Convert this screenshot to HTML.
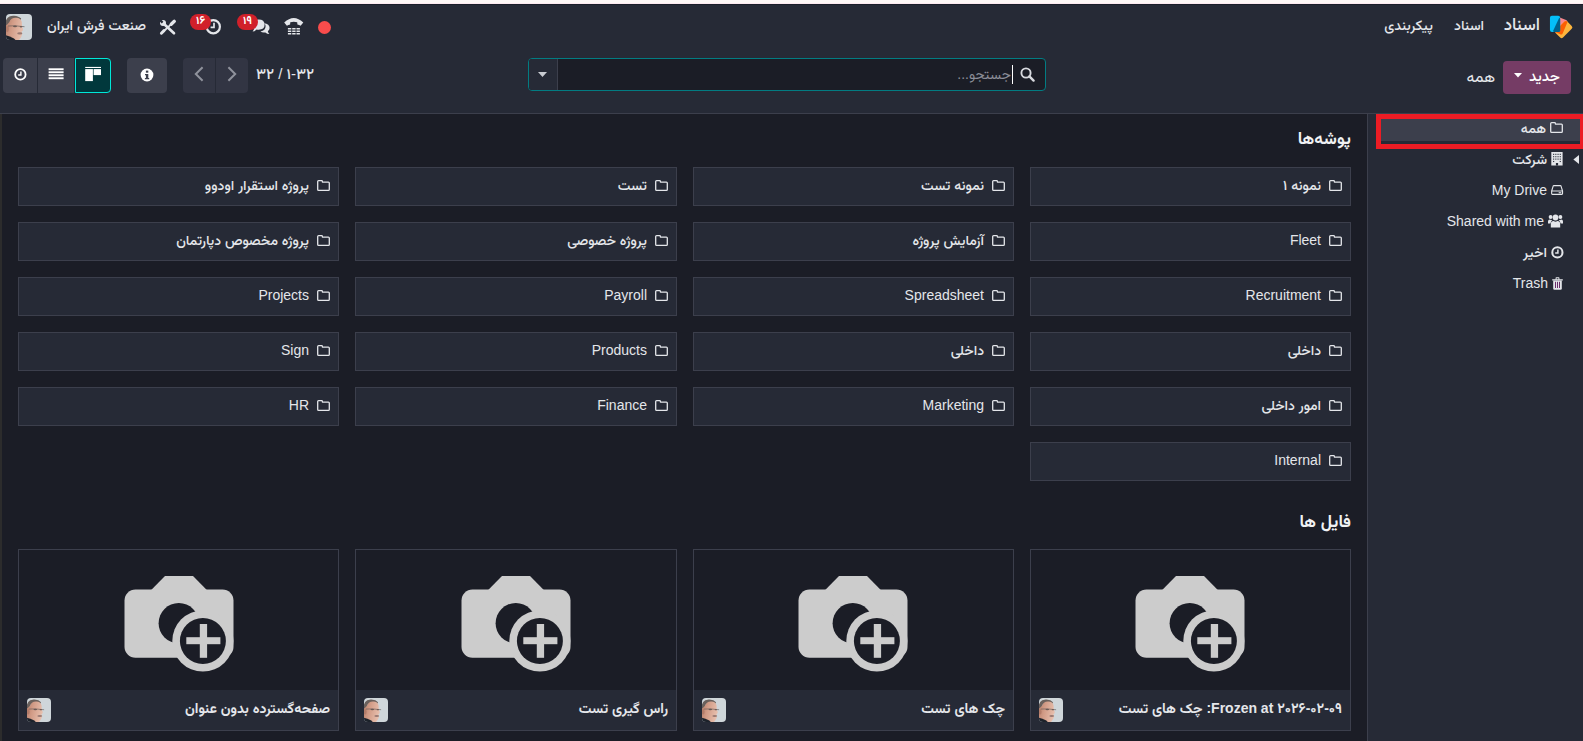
<!DOCTYPE html>
<html lang="fa" dir="rtl">
<head>
<meta charset="utf-8">
<title>اسناد</title>
<style>
*{box-sizing:border-box;margin:0;padding:0}
html,body{width:1583px;height:741px;overflow:hidden;background:#1b1d26}
body{font-family:"Liberation Sans","Vazirmatn","DejaVu Sans",sans-serif;font-size:14px;color:#e4e6ea;position:relative;direction:rtl}
.abs{position:absolute}
svg{display:block;overflow:visible}
#topstrip{z-index:5;left:0;top:0;width:1583px;height:5px;background:linear-gradient(#fef8f7 0,#fef8f7 3px,#fdeaf0 3px,#fdeaf0 4px,#1b1e2a 4px,#1b1e2a 5px)}
#nav{left:0;top:4px;width:1583px;height:46px;background:#262a36}
#cp{left:0;top:50px;width:1583px;height:64px;background:#262a36;border-bottom:1px solid #3c3f4c}
#side{left:1367px;top:114px;width:216px;height:627px;background:#262a36;border-left:1px solid #3c3f4c}
#main{left:0;top:114px;width:1367px;height:627px;overflow:hidden}
#mainin{left:0;top:-114px;width:1367px;height:741px}
.t{position:absolute;white-space:nowrap}
.tile{position:absolute;width:321px;height:39px;background:#262a36;border:1px solid #3c3f4c}
.fn{line-height:35px;font-size:14px;font-weight:500}
.card{position:absolute;width:321px;height:182px;background:#1b1d26;border:1px solid #3c3f4c}
.card .ft{position:absolute;left:0;right:0;top:140px;height:40px;background:#262a36}
.cn{line-height:36px;font-size:14px;font-weight:700}
.av{position:absolute;width:24px;height:24px;border-radius:4px;overflow:hidden}
.h{font-size:17px;font-weight:700;line-height:24px;color:#f1f2f4}
.si{font-size:14px;font-weight:500;line-height:20px}
.nv{line-height:24px;font-size:14px;font-weight:500}
.badge{position:absolute;height:16px;width:21px;border-radius:8px;background:#d1202a;color:#fff;font-size:11px;font-weight:700;line-height:12px;text-align:center}
</style>
</head>
<body>
<svg width="0" height="0" style="position:absolute"><defs><filter id="avb" x="-10%" y="-10%" width="120%" height="120%"><feGaussianBlur stdDeviation="0.65"/></filter><linearGradient id="avg" x1="0" y1="0" x2="1" y2="0.25"><stop offset="0" stop-color="#b47a66"/><stop offset="0.45" stop-color="#d29c87"/><stop offset="1" stop-color="#e6bdab"/></linearGradient></defs></svg>
<div id="topstrip" class="abs"></div>
<div id="nav" class="abs">
<svg class="abs" style="left:1540px;top:4px" width="40" height="36" viewBox="0 0 40 36"><defs><clipPath id="dm"><rect x="-5.1" y="-8.15" width="10.2" height="16.3" rx="2" transform="translate(23.76,21.56) rotate(45)"/></clipPath></defs><rect x="-5.1" y="-7.65" width="10.2" height="15.3" rx="2" transform="translate(20.28,17.95) rotate(22.8)" fill="#fc868b"/><rect x="-5.1" y="-8.15" width="10.2" height="16.3" rx="2" transform="translate(23.76,21.56) rotate(45)" fill="#fdb53d"/><g clip-path="url(#dm)"><rect x="-5.1" y="-7.65" width="10.2" height="15.3" rx="2" transform="translate(20.28,17.95) rotate(22.8)" fill="#fd5e03"/></g><rect x="9.96" y="7.78" width="10.2" height="16.3" rx="2" fill="#04c0f9"/><path d="M19.2 9.8 L20.16 10.4 V22.4 Q20.16 24.08 18.5 24.08 H14 Q12.8 24 13.3 22.6 Z" fill="#00628b"/></svg>
<span class="t nv" style="right:43px;top:9px;font-size:17px">اسناد</span>
<span class="t nv" style="right:99px;top:9px">اسناد</span>
<span class="t nv" style="right:150px;top:9px">پیکربندی</span>
<div class="abs" style="left:318px;top:16.5px;width:13px;height:13px;border-radius:50%;background:#f94c4c"></div>
<svg class="abs" style="left:284px;top:14px" width="20" height="17" viewBox="0 0 20 17"><path d="M0.2 4.6 Q9.75 -4.4 19.3 4.6 L16.6 7.8 Q15.2 7.2 13.4 6.6 L13.2 4.3 Q9.75 3 6.3 4.3 L6.1 6.6 Q4.3 7.2 2.9 7.8 Z" fill="#e4e6ea"/><g fill="#e4e6ea"><rect x="3.9" y="10" width="3.4" height="1.5"/><rect x="8.2" y="10" width="3.4" height="1.5"/><rect x="12.5" y="10" width="3.4" height="1.5"/><rect x="3.9" y="12.5" width="3.4" height="1.5"/><rect x="8.2" y="12.5" width="3.4" height="1.5"/><rect x="12.5" y="12.5" width="3.4" height="1.5"/><rect x="3.9" y="15" width="3.4" height="1.5"/><rect x="8.2" y="15" width="3.4" height="1.5"/><rect x="12.5" y="15" width="3.4" height="1.5"/></g></svg>
<svg class="abs" style="left:252px;top:15px" width="18" height="16" viewBox="0 0 18 16"><path d="M12 4.2 Q17.6 5 17.6 9 Q17.6 11 15.8 12.2 Q16.2 13.8 17.4 15 Q15 15 13.4 13.4 Q10.5 14 8.4 12.6 Q13.6 11.6 13.6 7 Q13.6 5.4 12 4.2 Z" fill="#e4e6ea"/><path d="M6.6 0.6 Q12.6 0.6 12.6 5.8 Q12.6 10.6 6.6 10.8 Q5.6 10.8 4.6 10.6 Q3 12.2 0.6 12.6 Q1.8 11.2 2.2 9.6 Q0.4 8.2 0.4 5.8 Q0.4 0.6 6.6 0.6 Z" fill="#e4e6ea"/></svg>
<div class="badge" style="left:237px;top:10px">۱۹</div>
<svg class="abs" style="left:205px;top:14px" width="17" height="17" viewBox="0 0 17 17"><circle cx="8.3" cy="8.7" r="6.6" fill="none" stroke="#e4e6ea" stroke-width="2.2"/><path d="M9 4.8 V9.4 H5.6" fill="none" stroke="#e4e6ea" stroke-width="1.7"/></svg>
<div class="badge" style="left:190px;top:10px">۱۶</div>
<svg class="abs" style="left:160px;top:16px" width="16" height="15" viewBox="0 0 16 15"><g stroke="#e4e6ea" stroke-linecap="round" fill="none"><path d="M14.3 1.3 L11.2 4.2" stroke-width="3.3"/><path d="M11.2 4.2 L4 11" stroke-width="1.8" stroke-linecap="butt"/><path d="M4 10.6 L1.4 13.2" stroke-width="2.9"/><path d="M4 4 L14 13.2" stroke-width="2.7"/></g><circle cx="3" cy="3" r="3" fill="#e4e6ea"/><path d="M2.6 2.6 L-0.6 -0.6" stroke="#262a36" stroke-width="2.2"/></svg>
<span class="t nv" style="right:1437px;top:9px">صنعت فرش ایران</span>
<div class="av" style="left:6px;top:10px;width:26px;height:26px"><svg width="26" height="26" viewBox="0 0 26 26"><rect width="26" height="26" fill="#cfd6da"/><g filter="url(#avb)"><path d="M-1 14 Q-1.5 1.2 8 1.7 Q13 2 15.2 4.6 L14 7 Q8 4 4 7 Q3 10 3.5 14 Z" fill="#6a615c"/><path d="M3.5 8 Q5 3.6 10 3.8 Q15 4 15.8 8 L16 12.5 Q17.4 15 16.8 16.6 Q16 17.4 15.6 17.8 Q16.6 20 15.4 22.6 Q14.4 25 12 27 H4 L-1 22 V12 Q1 11 3.5 8 Z" fill="url(#avg)"/><ellipse cx="1.2" cy="15" rx="1.6" ry="3" fill="#b37c69"/><path d="M2 12 L9 11.8 L18.5 12.7" stroke="#5b5554" stroke-width=".8" fill="none" opacity=".8"/><ellipse cx="9" cy="12.4" rx="2" ry=".8" fill="#6b5a55"/><ellipse cx="15" cy="12.7" rx="1.3" ry=".7" fill="#6b5a55"/><ellipse cx="13.8" cy="19.4" rx="2.6" ry="1.1" fill="#9a7a72"/><path d="M-1 21 Q4 22 8 24.5 L11 27.5 H-1 Z" fill="#1f232c"/></g></svg></div>
</div>
<div id="cp" class="abs">
<div class="abs" style="left:1503px;top:11px;width:68px;height:33px;border-radius:4px;background:#753c65"></div>
<span class="t" style="right:23px;top:10px;line-height:31px;font-size:15px;font-weight:500;color:#fff">جدید</span>
<svg class="abs" style="left:1514px;top:23px" width="8" height="5" viewBox="0 0 8 5"><path d="M0 0 H8 L4 4.6 Z" fill="#fff"/></svg>
<span class="t" style="right:88px;top:11px;line-height:31px;font-size:16px">همه</span>
<div class="abs" style="left:528px;top:8px;width:518px;height:33px;border:1px solid #027c82;border-radius:4px;background:#1b1d26;overflow:hidden"><div class="abs" style="left:0;top:0;width:29px;height:31px;background:#262a36;border-right:1px solid #3c3f4c"></div></div>
<svg class="abs" style="left:538px;top:22px" width="9" height="5" viewBox="0 0 9 5"><path d="M0 0 H9 L4.5 5 Z" fill="#c9ccd2"/></svg>
<svg class="abs" style="left:1020px;top:17px" width="15" height="15" viewBox="0 0 15 15"><circle cx="6" cy="6" r="4.6" fill="none" stroke="#d8dadf" stroke-width="1.9"/><path d="M9.4 9.4 L13.6 13.6" stroke="#d8dadf" stroke-width="2.4" stroke-linecap="round"/></svg>
<div class="abs" style="left:1012px;top:15px;width:1px;height:19px;background:#fff"></div>
<span class="t" style="right:572px;top:9px;line-height:31px;font-size:14px;color:#8b8e98">جستجو...</span>
<span class="t" style="left:256px;top:8px;line-height:31px;font-size:15px;font-weight:500;direction:rtl">۱-۳۲ / ۳۲</span>
<div class="abs" style="left:183px;top:8px;width:65px;height:35px;border-radius:4px;background:#323543"></div>
<div class="abs" style="left:215px;top:8px;width:1px;height:35px;background:#262a36"></div>
<svg class="abs" style="left:194px;top:16px" width="10" height="16" viewBox="0 0 10 16"><path d="M8.6 1.2 L1.8 8 L8.6 14.8" fill="none" stroke="#8f929c" stroke-width="2"/></svg>
<svg class="abs" style="left:227px;top:16px" width="10" height="16" viewBox="0 0 10 16"><path d="M1.4 1.2 L8.2 8 L1.4 14.8" fill="none" stroke="#8f929c" stroke-width="2"/></svg>
<div class="abs" style="left:127px;top:8px;width:40px;height:35px;border-radius:4px;background:#3c3f4c"></div>
<svg class="abs" style="left:140px;top:18px" width="14" height="14" viewBox="0 0 14 14"><circle cx="7" cy="7" r="6.4" fill="#fff"/><rect x="5.9" y="2.6" width="2.4" height="2.1" fill="#3c3f4c"/><path d="M5 5.9 H8.3 V10 H9.2 V11.3 H4.9 V10 H5.9 V7.2 H5 Z" fill="#3c3f4c"/></svg>
<div class="abs" style="left:3px;top:8px;width:108px;height:35px;border-radius:4px;background:#3c3f4c"></div>
<div class="abs" style="left:37px;top:8px;width:1px;height:35px;background:#262a36"></div>
<div class="abs" style="left:74px;top:8px;width:1px;height:35px;background:#262a36"></div>
<div class="abs" style="left:75px;top:8px;width:36px;height:35px;border-radius:0 4px 4px 0;background:#01383c;border:1px solid #00e8d8"></div>
<svg class="abs" style="left:14px;top:18px" width="13" height="13" viewBox="0 0 13 13"><circle cx="6.4" cy="6.4" r="5.2" fill="none" stroke="#fff" stroke-width="1.8"/><path d="M6.9 3.4 V7 H4.2" fill="none" stroke="#fff" stroke-width="1.4"/></svg>
<svg class="abs" style="left:48px;top:18px" width="16" height="12" viewBox="0 0 16 12"><g fill="#fff"><rect x="0.6" y="0.3" width="15" height="1.9"/><rect x="0.6" y="3.3" width="15" height="1.9"/><rect x="0.6" y="6.3" width="15" height="1.9"/><rect x="0.6" y="9.3" width="15" height="1.9"/></g></svg>
<svg class="abs" style="left:85px;top:16px" width="16" height="16" viewBox="0 0 16 16"><g fill="#fff"><rect x="0.2" y="0.9" width="15.8" height="1.1"/><rect x="0.2" y="3.1" width="7.7" height="12"/><rect x="8.6" y="3.1" width="7.4" height="6"/></g></svg>
</div>
<div id="side" class="abs">
<div class="abs" style="left:8px;top:0;width:207px;height:35px;border:5px solid #ec1c24;border-right-width:3px;background:#3c3f4c"><div class="abs" style="left:0;right:0;bottom:0;height:3px;background:#262a36"></div></div>
<svg class="abs" style="left:181.5999999999999px;top:8px" width="13" height="11" viewBox="0 0 13 11"><path d="M0.7 1.6 Q0.7 0.7 1.6 0.7 H4.6 Q5.4 0.7 5.4 1.5 V2.1 H11.4 Q12.3 2.1 12.3 3 V9.4 Q12.3 10.3 11.4 10.3 H1.6 Q0.7 10.3 0.7 9.4 Z" fill="none" stroke="#e4e6ea" stroke-width="1.3" stroke-linejoin="round"/></svg>
<span class="t si" style="right:37px;top:4px">همه</span>
<svg class="abs" style="left:205px;top:41px" width="6" height="9" viewBox="0 0 6 9"><path d="M6 0 V9 L0.4 4.5 Z" fill="#e4e6ea"/></svg>
<svg class="abs" style="left:183px;top:38.30000000000001px" width="12" height="13.5" preserveAspectRatio="none" viewBox="0 0 12 13"><rect x="0.3" y="0" width="11.3" height="13" fill="#e4e6ea"/><g fill="#262a36"><rect x="2.1" y="1.7" width="1.1" height="1.1"/><rect x="4.3" y="1.7" width="1.1" height="1.1"/><rect x="6.5" y="1.7" width="1.1" height="1.1"/><rect x="8.7" y="1.7" width="1.1" height="1.1"/><rect x="2.1" y="4.0" width="1.1" height="1.1"/><rect x="4.3" y="4.0" width="1.1" height="1.1"/><rect x="6.5" y="4.0" width="1.1" height="1.1"/><rect x="8.7" y="4.0" width="1.1" height="1.1"/><rect x="2.1" y="6.3" width="1.1" height="1.1"/><rect x="4.3" y="6.3" width="1.1" height="1.1"/><rect x="6.5" y="6.3" width="1.1" height="1.1"/><rect x="8.7" y="6.3" width="1.1" height="1.1"/><rect x="2.1" y="8.6" width="1.1" height="1.1"/><rect x="8.7" y="8.6" width="1.1" height="1.1"/><rect x="4.9" y="10.6" width="2.2" height="2.4"/></g></svg><span class="t si" style="right:36px;top:35px">شرکت</span>
<svg class="abs" style="left:183px;top:71px" width="12.2" height="10" viewBox="0 0 13 10" preserveAspectRatio="none"><path d="M0.7 6 L2.4 0.9 Q2.6 0.6 3 0.6 H10 Q10.4 0.6 10.6 0.9 L12.3 6 V8.6 Q12.3 9.4 11.5 9.4 H1.5 Q0.7 9.4 0.7 8.6 Z M0.7 6 H12.3" fill="none" stroke="#e4e6ea" stroke-width="1.2" stroke-linejoin="round"/><rect x="8.2" y="7.2" width="2.8" height="1.1" fill="#e4e6ea"/></svg><span class="t si" style="right:36px;top:66px">My Drive</span>
<svg class="abs" style="left:180px;top:100px" width="15" height="14" viewBox="0 0 16 14" preserveAspectRatio="none"><g fill="#e4e6ea"><circle cx="8" cy="3.6" r="3"/><circle cx="2.8" cy="3" r="2.1"/><circle cx="13.2" cy="3" r="2.1"/><path d="M3 13.6 V10.2 Q3 7 6 7 Q8 8.4 10 7 Q13 7 13 10.2 V13.6 Z"/><path d="M0 9.4 V7.6 Q0 5.4 2 5.4 Q3.4 6.4 4.6 6 Q3.2 7 2.6 9.4 Z"/><path d="M16 9.4 V7.6 Q16 5.4 14 5.4 Q12.6 6.4 11.4 6 Q12.8 7 13.4 9.4 Z"/></g></svg><span class="t si" style="right:39px;top:97px">Shared with me</span>
<svg class="abs" style="left:183px;top:132px" width="13" height="13" viewBox="0 0 13 13"><circle cx="6.4" cy="6.4" r="5.1" fill="none" stroke="#e4e6ea" stroke-width="2"/><path d="M6.9 3.4 V7 H4.2" fill="none" stroke="#e4e6ea" stroke-width="1.5"/></svg><span class="t si" style="right:36px;top:128px">اخیر</span>
<svg class="abs" style="left:184px;top:163px" width="11" height="13" viewBox="0 0 11 13"><path d="M0.2 2.2 H10.8 V3.4 H0.2 Z M3.6 2.2 V0.9 Q3.6 0.3 4.2 0.3 H6.8 Q7.4 0.3 7.4 0.9 V2.2 H6.4 V1.2 H4.6 V2.2 Z" fill="#e4e6ea"/><path d="M1.2 3.4 H9.8 V11.6 Q9.8 12.8 8.6 12.8 H2.4 Q1.2 12.8 1.2 11.6 Z" fill="#e4e6ea"/><g fill="#6b2d6b"><rect x="3" y="4.8" width="1" height="6.2"/><rect x="5" y="4.8" width="1" height="6.2"/><rect x="7" y="4.8" width="1" height="6.2"/></g></svg><span class="t si" style="right:35px;top:159px">Trash</span>
</div>
<div class="abs" style="left:0;top:114px;width:2px;height:627px;background:#2c2c2c;z-index:3"></div>
<div id="main" class="abs"><div id="mainin" class="abs">
<span class="t h" style="right:16px;top:127px">پوشه‌ها</span>
<div class="tile" style="left:1030px;top:167px;width:321px"><svg class="abs" style="left:298px;top:12px" width="13" height="11" viewBox="0 0 13 11"><path d="M0.7 1.6 Q0.7 0.7 1.6 0.7 H4.6 Q5.4 0.7 5.4 1.5 V2.1 H11.4 Q12.3 2.1 12.3 3 V9.4 Q12.3 10.3 11.4 10.3 H1.6 Q0.7 10.3 0.7 9.4 Z" fill="none" stroke="#e4e6ea" stroke-width="1.3" stroke-linejoin="round"/></svg><span class="t fn" style="right:29px;top:0">نمونه ۱</span></div>
<div class="tile" style="left:693px;top:167px;width:321px"><svg class="abs" style="left:298px;top:12px" width="13" height="11" viewBox="0 0 13 11"><path d="M0.7 1.6 Q0.7 0.7 1.6 0.7 H4.6 Q5.4 0.7 5.4 1.5 V2.1 H11.4 Q12.3 2.1 12.3 3 V9.4 Q12.3 10.3 11.4 10.3 H1.6 Q0.7 10.3 0.7 9.4 Z" fill="none" stroke="#e4e6ea" stroke-width="1.3" stroke-linejoin="round"/></svg><span class="t fn" style="right:29px;top:0">نمونه تست</span></div>
<div class="tile" style="left:355px;top:167px;width:322px"><svg class="abs" style="left:299px;top:12px" width="13" height="11" viewBox="0 0 13 11"><path d="M0.7 1.6 Q0.7 0.7 1.6 0.7 H4.6 Q5.4 0.7 5.4 1.5 V2.1 H11.4 Q12.3 2.1 12.3 3 V9.4 Q12.3 10.3 11.4 10.3 H1.6 Q0.7 10.3 0.7 9.4 Z" fill="none" stroke="#e4e6ea" stroke-width="1.3" stroke-linejoin="round"/></svg><span class="t fn" style="right:29px;top:0">تست</span></div>
<div class="tile" style="left:18px;top:167px;width:321px"><svg class="abs" style="left:298px;top:12px" width="13" height="11" viewBox="0 0 13 11"><path d="M0.7 1.6 Q0.7 0.7 1.6 0.7 H4.6 Q5.4 0.7 5.4 1.5 V2.1 H11.4 Q12.3 2.1 12.3 3 V9.4 Q12.3 10.3 11.4 10.3 H1.6 Q0.7 10.3 0.7 9.4 Z" fill="none" stroke="#e4e6ea" stroke-width="1.3" stroke-linejoin="round"/></svg><span class="t fn" style="right:29px;top:0">پروژه استقرار اودوو</span></div>
<div class="tile" style="left:1030px;top:222px;width:321px"><svg class="abs" style="left:298px;top:12px" width="13" height="11" viewBox="0 0 13 11"><path d="M0.7 1.6 Q0.7 0.7 1.6 0.7 H4.6 Q5.4 0.7 5.4 1.5 V2.1 H11.4 Q12.3 2.1 12.3 3 V9.4 Q12.3 10.3 11.4 10.3 H1.6 Q0.7 10.3 0.7 9.4 Z" fill="none" stroke="#e4e6ea" stroke-width="1.3" stroke-linejoin="round"/></svg><span class="t fn" style="right:29px;top:0">Fleet</span></div>
<div class="tile" style="left:693px;top:222px;width:321px"><svg class="abs" style="left:298px;top:12px" width="13" height="11" viewBox="0 0 13 11"><path d="M0.7 1.6 Q0.7 0.7 1.6 0.7 H4.6 Q5.4 0.7 5.4 1.5 V2.1 H11.4 Q12.3 2.1 12.3 3 V9.4 Q12.3 10.3 11.4 10.3 H1.6 Q0.7 10.3 0.7 9.4 Z" fill="none" stroke="#e4e6ea" stroke-width="1.3" stroke-linejoin="round"/></svg><span class="t fn" style="right:29px;top:0">آزمایش پروژه</span></div>
<div class="tile" style="left:355px;top:222px;width:322px"><svg class="abs" style="left:299px;top:12px" width="13" height="11" viewBox="0 0 13 11"><path d="M0.7 1.6 Q0.7 0.7 1.6 0.7 H4.6 Q5.4 0.7 5.4 1.5 V2.1 H11.4 Q12.3 2.1 12.3 3 V9.4 Q12.3 10.3 11.4 10.3 H1.6 Q0.7 10.3 0.7 9.4 Z" fill="none" stroke="#e4e6ea" stroke-width="1.3" stroke-linejoin="round"/></svg><span class="t fn" style="right:29px;top:0">پروژه خصوصی</span></div>
<div class="tile" style="left:18px;top:222px;width:321px"><svg class="abs" style="left:298px;top:12px" width="13" height="11" viewBox="0 0 13 11"><path d="M0.7 1.6 Q0.7 0.7 1.6 0.7 H4.6 Q5.4 0.7 5.4 1.5 V2.1 H11.4 Q12.3 2.1 12.3 3 V9.4 Q12.3 10.3 11.4 10.3 H1.6 Q0.7 10.3 0.7 9.4 Z" fill="none" stroke="#e4e6ea" stroke-width="1.3" stroke-linejoin="round"/></svg><span class="t fn" style="right:29px;top:0">پروژه مخصوص دپارتمان</span></div>
<div class="tile" style="left:1030px;top:277px;width:321px"><svg class="abs" style="left:298px;top:12px" width="13" height="11" viewBox="0 0 13 11"><path d="M0.7 1.6 Q0.7 0.7 1.6 0.7 H4.6 Q5.4 0.7 5.4 1.5 V2.1 H11.4 Q12.3 2.1 12.3 3 V9.4 Q12.3 10.3 11.4 10.3 H1.6 Q0.7 10.3 0.7 9.4 Z" fill="none" stroke="#e4e6ea" stroke-width="1.3" stroke-linejoin="round"/></svg><span class="t fn" style="right:29px;top:0">Recruitment</span></div>
<div class="tile" style="left:693px;top:277px;width:321px"><svg class="abs" style="left:298px;top:12px" width="13" height="11" viewBox="0 0 13 11"><path d="M0.7 1.6 Q0.7 0.7 1.6 0.7 H4.6 Q5.4 0.7 5.4 1.5 V2.1 H11.4 Q12.3 2.1 12.3 3 V9.4 Q12.3 10.3 11.4 10.3 H1.6 Q0.7 10.3 0.7 9.4 Z" fill="none" stroke="#e4e6ea" stroke-width="1.3" stroke-linejoin="round"/></svg><span class="t fn" style="right:29px;top:0">Spreadsheet</span></div>
<div class="tile" style="left:355px;top:277px;width:322px"><svg class="abs" style="left:299px;top:12px" width="13" height="11" viewBox="0 0 13 11"><path d="M0.7 1.6 Q0.7 0.7 1.6 0.7 H4.6 Q5.4 0.7 5.4 1.5 V2.1 H11.4 Q12.3 2.1 12.3 3 V9.4 Q12.3 10.3 11.4 10.3 H1.6 Q0.7 10.3 0.7 9.4 Z" fill="none" stroke="#e4e6ea" stroke-width="1.3" stroke-linejoin="round"/></svg><span class="t fn" style="right:29px;top:0">Payroll</span></div>
<div class="tile" style="left:18px;top:277px;width:321px"><svg class="abs" style="left:298px;top:12px" width="13" height="11" viewBox="0 0 13 11"><path d="M0.7 1.6 Q0.7 0.7 1.6 0.7 H4.6 Q5.4 0.7 5.4 1.5 V2.1 H11.4 Q12.3 2.1 12.3 3 V9.4 Q12.3 10.3 11.4 10.3 H1.6 Q0.7 10.3 0.7 9.4 Z" fill="none" stroke="#e4e6ea" stroke-width="1.3" stroke-linejoin="round"/></svg><span class="t fn" style="right:29px;top:0">Projects</span></div>
<div class="tile" style="left:1030px;top:332px;width:321px"><svg class="abs" style="left:298px;top:12px" width="13" height="11" viewBox="0 0 13 11"><path d="M0.7 1.6 Q0.7 0.7 1.6 0.7 H4.6 Q5.4 0.7 5.4 1.5 V2.1 H11.4 Q12.3 2.1 12.3 3 V9.4 Q12.3 10.3 11.4 10.3 H1.6 Q0.7 10.3 0.7 9.4 Z" fill="none" stroke="#e4e6ea" stroke-width="1.3" stroke-linejoin="round"/></svg><span class="t fn" style="right:29px;top:0">داخلی</span></div>
<div class="tile" style="left:693px;top:332px;width:321px"><svg class="abs" style="left:298px;top:12px" width="13" height="11" viewBox="0 0 13 11"><path d="M0.7 1.6 Q0.7 0.7 1.6 0.7 H4.6 Q5.4 0.7 5.4 1.5 V2.1 H11.4 Q12.3 2.1 12.3 3 V9.4 Q12.3 10.3 11.4 10.3 H1.6 Q0.7 10.3 0.7 9.4 Z" fill="none" stroke="#e4e6ea" stroke-width="1.3" stroke-linejoin="round"/></svg><span class="t fn" style="right:29px;top:0">داخلی</span></div>
<div class="tile" style="left:355px;top:332px;width:322px"><svg class="abs" style="left:299px;top:12px" width="13" height="11" viewBox="0 0 13 11"><path d="M0.7 1.6 Q0.7 0.7 1.6 0.7 H4.6 Q5.4 0.7 5.4 1.5 V2.1 H11.4 Q12.3 2.1 12.3 3 V9.4 Q12.3 10.3 11.4 10.3 H1.6 Q0.7 10.3 0.7 9.4 Z" fill="none" stroke="#e4e6ea" stroke-width="1.3" stroke-linejoin="round"/></svg><span class="t fn" style="right:29px;top:0">Products</span></div>
<div class="tile" style="left:18px;top:332px;width:321px"><svg class="abs" style="left:298px;top:12px" width="13" height="11" viewBox="0 0 13 11"><path d="M0.7 1.6 Q0.7 0.7 1.6 0.7 H4.6 Q5.4 0.7 5.4 1.5 V2.1 H11.4 Q12.3 2.1 12.3 3 V9.4 Q12.3 10.3 11.4 10.3 H1.6 Q0.7 10.3 0.7 9.4 Z" fill="none" stroke="#e4e6ea" stroke-width="1.3" stroke-linejoin="round"/></svg><span class="t fn" style="right:29px;top:0">Sign</span></div>
<div class="tile" style="left:1030px;top:387px;width:321px"><svg class="abs" style="left:298px;top:12px" width="13" height="11" viewBox="0 0 13 11"><path d="M0.7 1.6 Q0.7 0.7 1.6 0.7 H4.6 Q5.4 0.7 5.4 1.5 V2.1 H11.4 Q12.3 2.1 12.3 3 V9.4 Q12.3 10.3 11.4 10.3 H1.6 Q0.7 10.3 0.7 9.4 Z" fill="none" stroke="#e4e6ea" stroke-width="1.3" stroke-linejoin="round"/></svg><span class="t fn" style="right:29px;top:0">امور داخلی</span></div>
<div class="tile" style="left:693px;top:387px;width:321px"><svg class="abs" style="left:298px;top:12px" width="13" height="11" viewBox="0 0 13 11"><path d="M0.7 1.6 Q0.7 0.7 1.6 0.7 H4.6 Q5.4 0.7 5.4 1.5 V2.1 H11.4 Q12.3 2.1 12.3 3 V9.4 Q12.3 10.3 11.4 10.3 H1.6 Q0.7 10.3 0.7 9.4 Z" fill="none" stroke="#e4e6ea" stroke-width="1.3" stroke-linejoin="round"/></svg><span class="t fn" style="right:29px;top:0">Marketing</span></div>
<div class="tile" style="left:355px;top:387px;width:322px"><svg class="abs" style="left:299px;top:12px" width="13" height="11" viewBox="0 0 13 11"><path d="M0.7 1.6 Q0.7 0.7 1.6 0.7 H4.6 Q5.4 0.7 5.4 1.5 V2.1 H11.4 Q12.3 2.1 12.3 3 V9.4 Q12.3 10.3 11.4 10.3 H1.6 Q0.7 10.3 0.7 9.4 Z" fill="none" stroke="#e4e6ea" stroke-width="1.3" stroke-linejoin="round"/></svg><span class="t fn" style="right:29px;top:0">Finance</span></div>
<div class="tile" style="left:18px;top:387px;width:321px"><svg class="abs" style="left:298px;top:12px" width="13" height="11" viewBox="0 0 13 11"><path d="M0.7 1.6 Q0.7 0.7 1.6 0.7 H4.6 Q5.4 0.7 5.4 1.5 V2.1 H11.4 Q12.3 2.1 12.3 3 V9.4 Q12.3 10.3 11.4 10.3 H1.6 Q0.7 10.3 0.7 9.4 Z" fill="none" stroke="#e4e6ea" stroke-width="1.3" stroke-linejoin="round"/></svg><span class="t fn" style="right:29px;top:0">HR</span></div>
<div class="tile" style="left:1030px;top:442px;width:321px"><svg class="abs" style="left:298px;top:12px" width="13" height="11" viewBox="0 0 13 11"><path d="M0.7 1.6 Q0.7 0.7 1.6 0.7 H4.6 Q5.4 0.7 5.4 1.5 V2.1 H11.4 Q12.3 2.1 12.3 3 V9.4 Q12.3 10.3 11.4 10.3 H1.6 Q0.7 10.3 0.7 9.4 Z" fill="none" stroke="#e4e6ea" stroke-width="1.3" stroke-linejoin="round"/></svg><span class="t fn" style="right:29px;top:0">Internal</span></div>
<span class="t h" style="right:16px;top:510px">فایل ها</span>
<div class="card" style="left:1030px;top:549px;width:321px"><svg class="abs" style="left:-1px;top:-1px" width="320" height="141" viewBox="0 0 320 141"><g fill="#cccccc"><rect x="105.5" y="40.5" width="109" height="68.3" rx="11" ry="11"/><path d="M131.7 41.5 L146 26.9 H174 L188.3 41.5 Z"/></g><circle cx="159.8" cy="74.2" r="20.2" fill="#1b1d26"/><circle cx="183.9" cy="92" r="30.6" fill="#cccccc"/><circle cx="183.9" cy="92" r="23" fill="#1b1d26"/><rect x="167.3" y="88.2" width="34.1" height="7" fill="#cccccc"/><rect x="180.8" y="75" width="7.3" height="33.8" fill="#cccccc"/></svg><div class="ft"><span class="t cn" style="right:8px;top:0">Frozen at ۲۰۲۶-۰۲-۰۹: چک های تست</span><div class="av" style="left:8px;top:8px"><svg width="24" height="24" viewBox="0 0 26 26"><rect width="26" height="26" fill="#cfd6da"/><g filter="url(#avb)"><path d="M-1 14 Q-1.5 1.2 8 1.7 Q13 2 15.2 4.6 L14 7 Q8 4 4 7 Q3 10 3.5 14 Z" fill="#6a615c"/><path d="M3.5 8 Q5 3.6 10 3.8 Q15 4 15.8 8 L16 12.5 Q17.4 15 16.8 16.6 Q16 17.4 15.6 17.8 Q16.6 20 15.4 22.6 Q14.4 25 12 27 H4 L-1 22 V12 Q1 11 3.5 8 Z" fill="url(#avg)"/><ellipse cx="1.2" cy="15" rx="1.6" ry="3" fill="#b37c69"/><path d="M2 12 L9 11.8 L18.5 12.7" stroke="#5b5554" stroke-width=".8" fill="none" opacity=".8"/><ellipse cx="9" cy="12.4" rx="2" ry=".8" fill="#6b5a55"/><ellipse cx="15" cy="12.7" rx="1.3" ry=".7" fill="#6b5a55"/><ellipse cx="13.8" cy="19.4" rx="2.6" ry="1.1" fill="#9a7a72"/><path d="M-1 21 Q4 22 8 24.5 L11 27.5 H-1 Z" fill="#1f232c"/></g></svg></div></div></div>
<div class="card" style="left:693px;top:549px;width:321px"><svg class="abs" style="left:-1px;top:-1px" width="320" height="141" viewBox="0 0 320 141"><g fill="#cccccc"><rect x="105.5" y="40.5" width="109" height="68.3" rx="11" ry="11"/><path d="M131.7 41.5 L146 26.9 H174 L188.3 41.5 Z"/></g><circle cx="159.8" cy="74.2" r="20.2" fill="#1b1d26"/><circle cx="183.9" cy="92" r="30.6" fill="#cccccc"/><circle cx="183.9" cy="92" r="23" fill="#1b1d26"/><rect x="167.3" y="88.2" width="34.1" height="7" fill="#cccccc"/><rect x="180.8" y="75" width="7.3" height="33.8" fill="#cccccc"/></svg><div class="ft"><span class="t cn" style="right:8px;top:0">چک های تست</span><div class="av" style="left:8px;top:8px"><svg width="24" height="24" viewBox="0 0 26 26"><rect width="26" height="26" fill="#cfd6da"/><g filter="url(#avb)"><path d="M-1 14 Q-1.5 1.2 8 1.7 Q13 2 15.2 4.6 L14 7 Q8 4 4 7 Q3 10 3.5 14 Z" fill="#6a615c"/><path d="M3.5 8 Q5 3.6 10 3.8 Q15 4 15.8 8 L16 12.5 Q17.4 15 16.8 16.6 Q16 17.4 15.6 17.8 Q16.6 20 15.4 22.6 Q14.4 25 12 27 H4 L-1 22 V12 Q1 11 3.5 8 Z" fill="url(#avg)"/><ellipse cx="1.2" cy="15" rx="1.6" ry="3" fill="#b37c69"/><path d="M2 12 L9 11.8 L18.5 12.7" stroke="#5b5554" stroke-width=".8" fill="none" opacity=".8"/><ellipse cx="9" cy="12.4" rx="2" ry=".8" fill="#6b5a55"/><ellipse cx="15" cy="12.7" rx="1.3" ry=".7" fill="#6b5a55"/><ellipse cx="13.8" cy="19.4" rx="2.6" ry="1.1" fill="#9a7a72"/><path d="M-1 21 Q4 22 8 24.5 L11 27.5 H-1 Z" fill="#1f232c"/></g></svg></div></div></div>
<div class="card" style="left:355px;top:549px;width:322px"><svg class="abs" style="left:0px;top:-1px" width="320" height="141" viewBox="0 0 320 141"><g fill="#cccccc"><rect x="105.5" y="40.5" width="109" height="68.3" rx="11" ry="11"/><path d="M131.7 41.5 L146 26.9 H174 L188.3 41.5 Z"/></g><circle cx="159.8" cy="74.2" r="20.2" fill="#1b1d26"/><circle cx="183.9" cy="92" r="30.6" fill="#cccccc"/><circle cx="183.9" cy="92" r="23" fill="#1b1d26"/><rect x="167.3" y="88.2" width="34.1" height="7" fill="#cccccc"/><rect x="180.8" y="75" width="7.3" height="33.8" fill="#cccccc"/></svg><div class="ft"><span class="t cn" style="right:8px;top:0">راس گیری تست</span><div class="av" style="left:8px;top:8px"><svg width="24" height="24" viewBox="0 0 26 26"><rect width="26" height="26" fill="#cfd6da"/><g filter="url(#avb)"><path d="M-1 14 Q-1.5 1.2 8 1.7 Q13 2 15.2 4.6 L14 7 Q8 4 4 7 Q3 10 3.5 14 Z" fill="#6a615c"/><path d="M3.5 8 Q5 3.6 10 3.8 Q15 4 15.8 8 L16 12.5 Q17.4 15 16.8 16.6 Q16 17.4 15.6 17.8 Q16.6 20 15.4 22.6 Q14.4 25 12 27 H4 L-1 22 V12 Q1 11 3.5 8 Z" fill="url(#avg)"/><ellipse cx="1.2" cy="15" rx="1.6" ry="3" fill="#b37c69"/><path d="M2 12 L9 11.8 L18.5 12.7" stroke="#5b5554" stroke-width=".8" fill="none" opacity=".8"/><ellipse cx="9" cy="12.4" rx="2" ry=".8" fill="#6b5a55"/><ellipse cx="15" cy="12.7" rx="1.3" ry=".7" fill="#6b5a55"/><ellipse cx="13.8" cy="19.4" rx="2.6" ry="1.1" fill="#9a7a72"/><path d="M-1 21 Q4 22 8 24.5 L11 27.5 H-1 Z" fill="#1f232c"/></g></svg></div></div></div>
<div class="card" style="left:18px;top:549px;width:321px"><svg class="abs" style="left:0px;top:-1px" width="320" height="141" viewBox="0 0 320 141"><g fill="#cccccc"><rect x="105.5" y="40.5" width="109" height="68.3" rx="11" ry="11"/><path d="M131.7 41.5 L146 26.9 H174 L188.3 41.5 Z"/></g><circle cx="159.8" cy="74.2" r="20.2" fill="#1b1d26"/><circle cx="183.9" cy="92" r="30.6" fill="#cccccc"/><circle cx="183.9" cy="92" r="23" fill="#1b1d26"/><rect x="167.3" y="88.2" width="34.1" height="7" fill="#cccccc"/><rect x="180.8" y="75" width="7.3" height="33.8" fill="#cccccc"/></svg><div class="ft"><span class="t cn" style="right:8px;top:0">صفحه‌گسترده بدون عنوان</span><div class="av" style="left:8px;top:8px"><svg width="24" height="24" viewBox="0 0 26 26"><rect width="26" height="26" fill="#cfd6da"/><g filter="url(#avb)"><path d="M-1 14 Q-1.5 1.2 8 1.7 Q13 2 15.2 4.6 L14 7 Q8 4 4 7 Q3 10 3.5 14 Z" fill="#6a615c"/><path d="M3.5 8 Q5 3.6 10 3.8 Q15 4 15.8 8 L16 12.5 Q17.4 15 16.8 16.6 Q16 17.4 15.6 17.8 Q16.6 20 15.4 22.6 Q14.4 25 12 27 H4 L-1 22 V12 Q1 11 3.5 8 Z" fill="url(#avg)"/><ellipse cx="1.2" cy="15" rx="1.6" ry="3" fill="#b37c69"/><path d="M2 12 L9 11.8 L18.5 12.7" stroke="#5b5554" stroke-width=".8" fill="none" opacity=".8"/><ellipse cx="9" cy="12.4" rx="2" ry=".8" fill="#6b5a55"/><ellipse cx="15" cy="12.7" rx="1.3" ry=".7" fill="#6b5a55"/><ellipse cx="13.8" cy="19.4" rx="2.6" ry="1.1" fill="#9a7a72"/><path d="M-1 21 Q4 22 8 24.5 L11 27.5 H-1 Z" fill="#1f232c"/></g></svg></div></div></div>
</div></div>
</body>
</html>
